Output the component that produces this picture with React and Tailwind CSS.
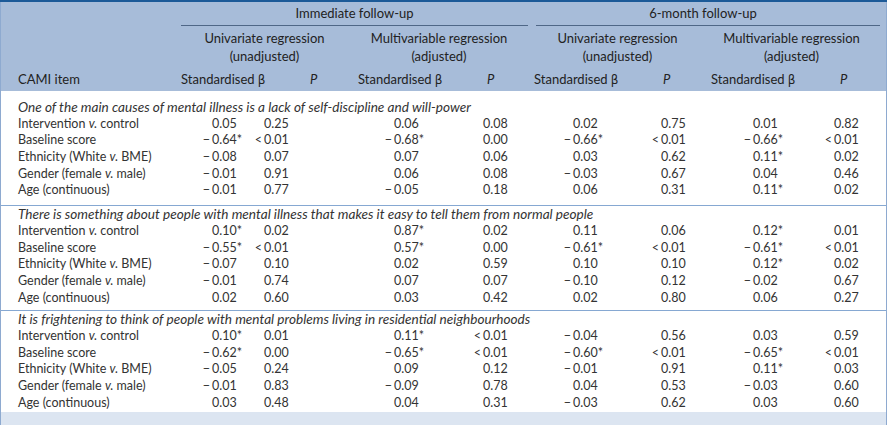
import React from 'react';

const sections = [
  {
    title: 'One of the main causes of mental illness is a lack of self-discipline and will-power',
    pad: 'pt-[8px] pb-[6px] border-b',
    rows: [
      ['Intervention v. control', '0.05', '0.25', '0.06', '0.08', '0.02', '0.75', '0.01', '0.82'],
      ['Baseline score', '−0.64*', '<0.01', '−0.68*', '0.00', '−0.66*', '<0.01', '−0.66*', '<0.01'],
      ['Ethnicity (White v. BME)', '−0.08', '0.07', '0.07', '0.06', '0.03', '0.62', '0.11*', '0.02'],
      ['Gender (female v. male)', '−0.01', '0.91', '0.06', '0.08', '−0.03', '0.67', '0.04', '0.46'],
      ['Age (continuous)', '−0.01', '0.77', '−0.05', '0.18', '0.06', '0.31', '0.11*', '0.02'],
    ],
  },
  {
    title: 'There is something about people with mental illness that makes it easy to tell them from normal people',
    pad: 'pt-0 pb-[4px] border-b',
    rows: [
      ['Intervention v. control', '0.10*', '0.02', '0.87*', '0.02', '0.11', '0.06', '0.12*', '0.01'],
      ['Baseline score', '−0.55*', '<0.01', '0.57*', '0.00', '−0.61*', '<0.01', '−0.61*', '<0.01'],
      ['Ethnicity (White v. BME)', '−0.07', '0.10', '0.02', '0.59', '0.10', '0.10', '0.12*', '0.02'],
      ['Gender (female v. male)', '−0.01', '0.74', '0.07', '0.07', '−0.10', '0.12', '−0.02', '0.67'],
      ['Age (continuous)', '0.02', '0.60', '0.03', '0.42', '0.02', '0.80', '0.06', '0.27'],
    ],
  },
  {
    title: 'It is frightening to think of people with mental problems living in residential neighbourhoods',
    pad: 'pt-0 pb-[1px]',
    rows: [
      ['Intervention v. control', '0.10*', '0.01', '0.11*', '<0.01', '−0.04', '0.56', '0.03', '0.59'],
      ['Baseline score', '−0.62*', '0.00', '−0.65*', '<0.01', '−0.60*', '<0.01', '−0.65*', '<0.01'],
      ['Ethnicity (White v. BME)', '−0.05', '0.24', '0.09', '0.12', '−0.01', '0.91', '0.11*', '0.03'],
      ['Gender (female v. male)', '−0.01', '0.83', '−0.09', '0.78', '0.04', '0.53', '−0.03', '0.60'],
      ['Age (continuous)', '0.03', '0.48', '0.04', '0.31', '−0.03', '0.62', '0.03', '0.60'],
    ],
  },
];

// label with italic "v."
function Label({ text }) {
  const parts = text.split('v.');
  if (parts.length === 1) return <span>{text}</span>;
  return (
    <span>
      {parts[0]}
      <i>v.</i>
      {parts[1]}
    </span>
  );
}

// hanging sign so the digits line up
function Num({ value }) {
  let sign = '';
  let rest = value;
  if (value[0] === '−' || value[0] === '<') {
    sign = value[0];
    rest = value.slice(1);
  }
  return (
    <div className="flex">
      <span className="w-[11px] text-right pr-[2px]">{sign}</span>
      <span>{rest}</span>
    </div>
  );
}

function GroupHead() {
  return (
    <div className="grid grid-cols-[129px_1fr]">
      <span>
        Standardised <span className="font-['DejaVu_Sans'] text-[12px]">β</span>
      </span>
      <span className="italic">P</span>
    </div>
  );
}

export default function App() {
  return (
    <div className="w-[887px] h-[425px] bg-white font-['Lato',sans-serif] text-[13px] text-[#333] overflow-hidden">
      <div className="h-[2px] bg-[#1c5a98]" />
      <div className="border-x border-[#8eaad0]">
        {/* header */}
        <div className="bg-[#a7bcd9] text-[#222]">
          <div className="grid grid-cols-[180px_355px_1fr] h-[24px]">
            <div />
            <div className="mr-[8px] border-b border-[#4f6787] text-center leading-[23px]">Immediate follow-up</div>
            <div className="mr-[6px] pr-[10px] border-b border-[#4f6787] text-center leading-[23px]">6-month follow-up</div>
          </div>
          <div className="grid grid-cols-[180px_177px_176px_177px_1fr] pt-[3px] pb-[3px] leading-[18px] text-center">
            <div />
            <div className="pr-[10px]">Univariate regression<br />(unadjusted)</div>
            <div className="pr-[14px]">Multivariable regression<br />(adjusted)</div>
            <div className="pr-[10px]">Univariate regression<br />(unadjusted)</div>
            <div className="pr-[14px]">Multivariable regression<br />(adjusted)</div>
          </div>
          <div className="grid grid-cols-[180px_177px_176px_177px_1fr] h-[23px] leading-[23px]">
            <div className="pl-[17px]">CAMI item</div>
            <GroupHead />
            <GroupHead />
            <GroupHead />
            <GroupHead />
          </div>
        </div>

        {/* body */}
        {sections.map((s, i) => (
          <div key={i} className={`${s.pad} border-[#86a8d2] leading-[16.7px] text-[12.5px]`}>
            <div className="pl-[17px] italic text-[13.6px] h-[16.7px]">{s.title}</div>
            {s.rows.map((r, j) => (
              <div key={j} className="grid grid-cols-[200px_52px_130px_89px_90px_88px_92px_81px_1fr] h-[16.7px]">
                <div className="pl-[17px]">
                  <Label text={r[0]} />
                </div>
                {r.slice(1).map((v, k) => (
                  <Num key={k} value={v} />
                ))}
              </div>
            ))}
          </div>
        ))}
        <div className="h-[13px] bg-[#dce5f1]" />
      </div>
    </div>
  );
}
